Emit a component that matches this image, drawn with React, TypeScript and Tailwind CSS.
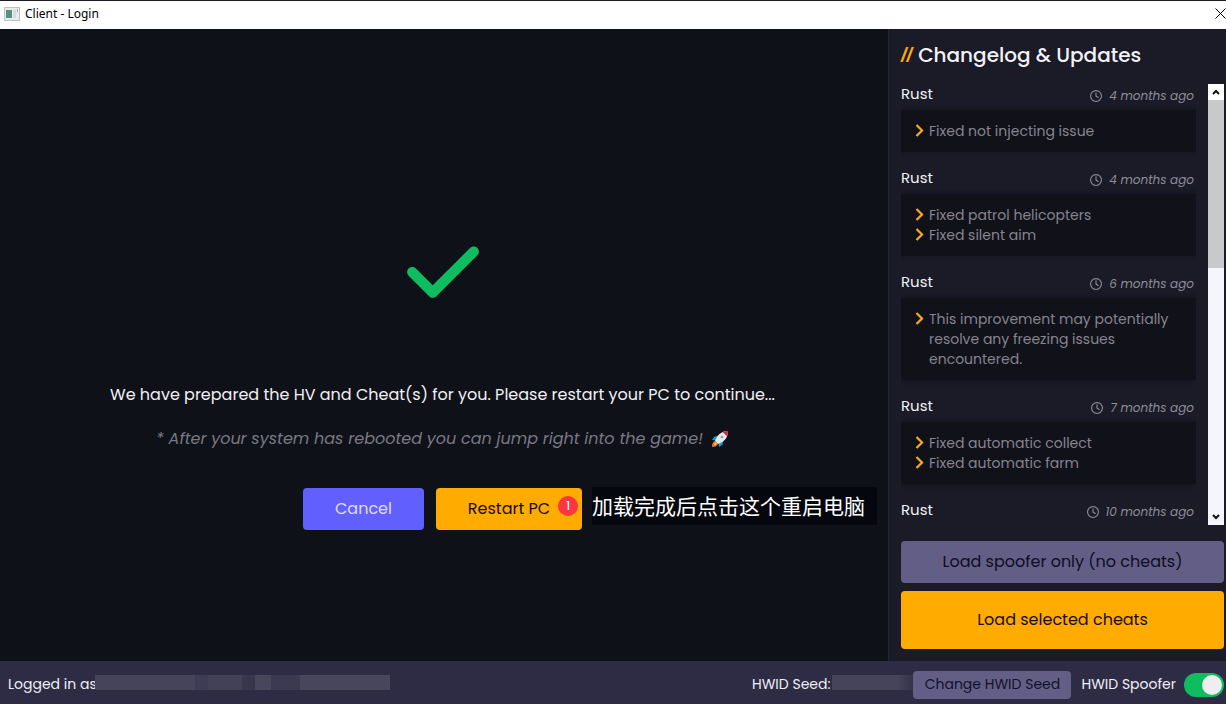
import { useState } from "react";
import { FaCheck, FaRegClock } from "react-icons/fa6";

type Entry = {
	game: string;
	age: string;
	changes: string[];
};

const entries: Entry[] = [
	{ game: "Rust", age: "4 months ago", changes: ["Fixed not injecting issue"] },
	{ game: "Rust", age: "4 months ago", changes: ["Fixed patrol helicopters", "Fixed silent aim"] },
	{
		game: "Rust",
		age: "6 months ago",
		changes: ["This improvement may potentially resolve any freezing issues encountered."],
	},
	{ game: "Rust", age: "7 months ago", changes: ["Fixed automatic collect", "Fixed automatic farm"] },
	{ game: "Rust", age: "10 months ago", changes: [] },
];

function WindowIcon() {
	return (
		<svg viewBox="0 0 16 14" className="h-[14px] w-4" aria-hidden="true">
			<rect x="0.5" y="0.5" width="15" height="13" fill="#e9ecec" stroke="#bcc2c2" />
			<rect x="2" y="3" width="6" height="8" fill="#5c8f84" />
			<rect x="9" y="3" width="3" height="8" fill="#cfe0dc" />
			<rect x="13" y="2" width="1" height="3" fill="#a5abab" />
		</svg>
	);
}

function Rocket() {
	return (
		<svg viewBox="0 0 18 18" className="h-[18px] w-[18px]" aria-hidden="true">
			<path d="M7 6 3.5 6.5 1 10l4 .5z" fill="#1ba1d6" />
			<path d="M12 11l-.5 3.5L8 17l-.5-4z" fill="#1ba1d6" />
			<path d="M4 11c-2 .5-3 3-3 6 3 0 5-1 6-3z" fill="#f7731c" />
			<path d="M4.500 12.500c-1 .5-1.500 1.500-1.700 3 1.500-.2 2.500-.8 3-1.800z" fill="#ffc83d" />
			<path d="M17 1c-5 0-8 2-10.500 5L4 11l3 3 5-2.500C15 9 17 6 17 1z" fill="#e6e7e8" />
			<path d="M17 1c-2 0-3.700.3-5.200 1L16 6.200C16.700 4.700 17 3 17 1z" fill="#d3203c" />
			<circle cx="11" cy="7" r="1.300" fill="#7fa3b5" />
		</svg>
	);
}

function Chevron() {
	return (
		<svg viewBox="0 0 9 13" className="mt-[3px] h-[13px] w-[9px] shrink-0" fill="none" aria-hidden="true">
			<path d="M1.500 1l5.500 5.500L1.500 12" stroke="#f5a623" strokeWidth="2.300" />
		</svg>
	);
}

function ScrollArrow({ d }: { d: string }) {
	return (
		<svg viewBox="0 0 8 6" className="h-[6px] w-2" fill="none" aria-hidden="true">
			<path d={d} stroke="#111" strokeWidth="2" />
		</svg>
	);
}

function ChangelogEntry({ entry }: { entry: Entry }) {
	return (
		<li className="shrink-0">
			<div className="flex h-5 items-center justify-between">
				<h2 className="text-[15px] text-[#f1f1f5]">{entry.game}</h2>
				<p className="mt-1 flex items-center gap-[7px] pr-[2px] text-[12px] text-[#8d8d97] italic">
					<FaRegClock className="h-3 w-3" />
					{entry.age}
				</p>
			</div>
			{entry.changes.length > 0 && (
				<ul className="mt-[6px] bg-[#11111a] px-[14px] py-[11px] text-[14px] leading-5 text-[#85858d] shadow-[0_0_4px_#11111a]">
					{entry.changes.map((change) => (
						<li key={change} className="flex gap-[5px]">
							<Chevron />
							<span>{change}</span>
						</li>
					))}
				</ul>
			)}
		</li>
	);
}

export default function App() {
	const [spoofer, setSpoofer] = useState(true);

	return (
		<div className="flex h-screen flex-col overflow-hidden bg-[#0f1119] font-['Poppins','Inter','Noto_Sans_CJK_SC',sans-serif] text-white">
			<header className="flex h-[29px] shrink-0 items-center justify-between border-t border-[#1c1a22] bg-white pl-1 font-['Noto_Sans',sans-serif] text-black">
				<div className="flex items-center gap-[5px] pb-[3px]">
					<WindowIcon />
					<span className="text-xs">Client - Login</span>
				</div>
				<button type="button" aria-label="Close" className="pb-1">
					<svg viewBox="0 0 11 11" className="h-[11px] w-[11px]" aria-hidden="true">
						<path d="M.5.5l10 10M10.500.5l-10 10" stroke="#000" />
					</svg>
				</button>
			</header>

			<div className="flex min-h-0 flex-1">
				<main className="flex min-w-0 flex-1 flex-col items-center justify-center pr-[3px]">
					<div className="flex h-[223px] items-center">
						<FaCheck className="h-[82px] w-[72px] text-[#0fbd61]" />
					</div>
					<p className="text-[16px] leading-6 text-[#f0f0f3]">
						We have prepared the HV and Cheat(s) for you. Please restart your PC to continue...
					</p>
					<p className="mt-5 flex items-center gap-2 text-[16px] leading-6 text-[#797a81] italic">
						* After your system has rebooted you can jump right into the game!
						<Rocket />
					</p>
					<div className="relative mt-[37px] flex gap-3">
						<button type="button" className="h-[42px] w-[121px] rounded-[4px] bg-[#625fff] text-[16px] text-[#dddcff]">
							Cancel
						</button>
						<button type="button" className="relative h-[42px] w-[146px] rounded-[4px] bg-[#ffab00] text-[16px] text-[#1a0d10]">
							Restart PC
							<span className="absolute top-2 right-1 flex h-5 w-5 items-center justify-center rounded-full bg-[#fb3640] text-[13px] text-white">
								1
							</span>
						</button>
						<p className="absolute -top-px left-full ml-[10px] flex h-[38px] w-[285px] items-center bg-[#05070e] font-['Noto_Sans_CJK_SC',sans-serif] text-[21px] whitespace-nowrap">
							加载完成后点击这个重启电脑
						</p>
					</div>
				</main>

				<aside className="flex w-[338px] shrink-0 flex-col border-l border-[#24252f] bg-[#1b1a27] pr-[2px] pb-3 pl-3">
					<h1 className="flex h-[51px] shrink-0 items-center gap-[6px] text-[20px] font-medium text-[#f2f2f6]">
						<span className="font-['Liberation_Sans',sans-serif] font-bold text-[#f9a81a] italic">//</span>
						Changelog &amp; Updates
					</h1>

					<div className="mt-1 flex min-h-0 flex-1 gap-3">
						<ul className="flex min-w-0 flex-1 flex-col gap-4 overflow-hidden">
							{entries.map((entry, i) => (
								<ChangelogEntry key={i} entry={entry} />
							))}
						</ul>
						<div className="flex w-4 shrink-0 flex-col bg-[#f6f5fb]">
							<button type="button" aria-label="Scroll up" className="flex h-4 items-center justify-center bg-white">
								<ScrollArrow d="M1 5l3-3 3 3" />
							</button>
							<div className="h-[168px] bg-[#c9c8cb]" />
							<button type="button" aria-label="Scroll down" className="mt-auto flex h-4 items-center justify-center">
								<ScrollArrow d="M1 1l3 3 3-3" />
							</button>
						</div>
					</div>

					<button type="button" className="mt-4 h-[42px] shrink-0 rounded-[4px] bg-[#625e86] text-[16px] text-[#0f0d22]">
						Load spoofer only (no cheats)
					</button>
					<button type="button" className="mt-2 h-[58px] shrink-0 rounded-[4px] bg-[#ffab00] text-[16px] text-[#1a0d10]">
						Load selected cheats
					</button>
				</aside>
			</div>

			<footer className="flex h-[43px] shrink-0 items-center justify-between bg-[#2e2c45] pt-1 pr-[2px] pl-2 text-[14px] text-[#eeeef6]">
				<div className="flex items-center">
					<span className="w-[87px] whitespace-nowrap">Logged in as</span>
					<span className="mb-1 flex h-[15px] w-[295px]">
						<span className="flex-1 bg-[#45445a]" />
						<span className="w-[13px] bg-[#3d3c54]" />
						<span className="w-[34px] bg-[#424158]" />
						<span className="w-[13px] bg-[#38364f]" />
						<span className="w-[16px] bg-[#47465b]" />
						<span className="w-[29px] bg-[#3c3a53]" />
						<span className="w-[90px] bg-[#47465c]" />
					</span>
				</div>
				<div className="flex items-center">
					<span>HWID Seed:</span>
					<span className="mb-1 ml-[2px] h-[15px] w-[81px] bg-linear-to-r from-[#45445a] from-80% to-[#35334b]" />
					<button type="button" className="h-7 w-[158px] rounded-[4px] bg-[#625e86] text-[14px] text-[#14122b]">
						Change HWID Seed
					</button>
					<label htmlFor="spoofer" className="ml-[10px]">
						HWID Spoofer
					</label>
					<input
						id="spoofer"
						type="checkbox"
						checked={spoofer}
						onChange={(e) => setSpoofer(e.target.checked)}
						className="ml-2 flex h-6 w-10 appearance-none items-center rounded-full bg-[#55536e] p-[2px] before:h-5 before:w-5 before:rounded-full before:bg-[#eeeeef] checked:justify-end checked:bg-[#0fbd61]"
					/>
				</div>
			</footer>
		</div>
	);
}
